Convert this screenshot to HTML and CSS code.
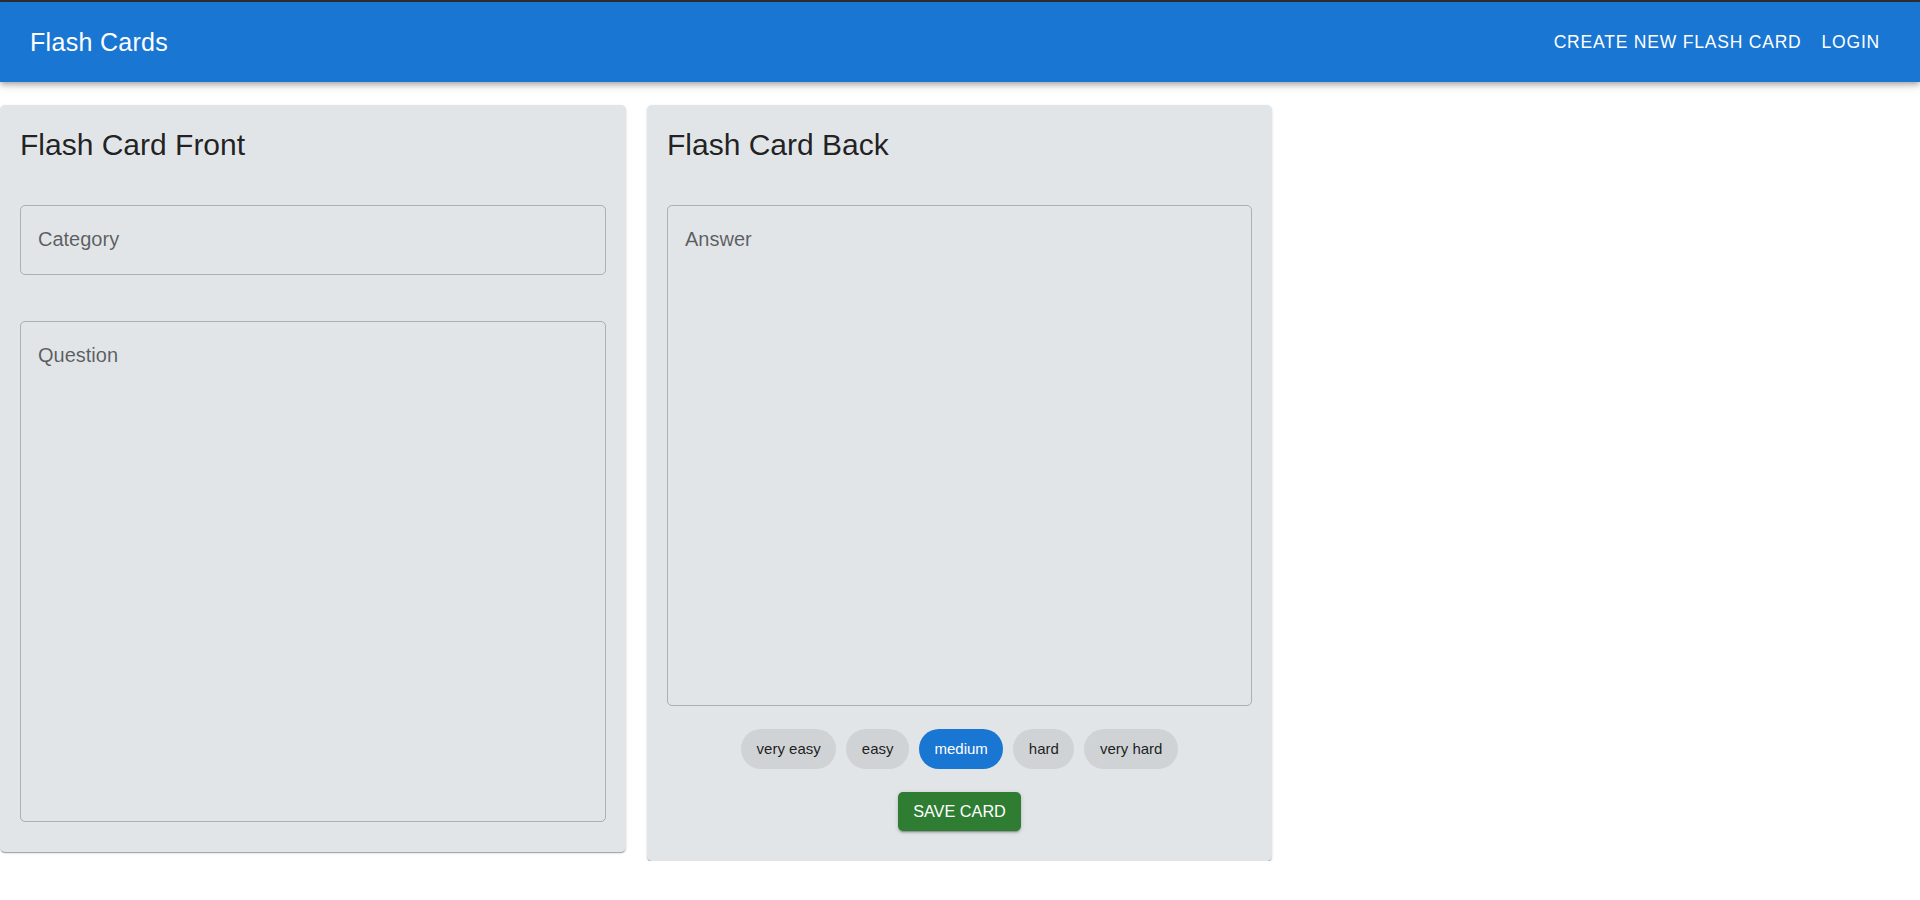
FILE: index.html
```html
<!DOCTYPE html>
<html lang="en">
<head>
<meta charset="utf-8">
<title>Flash Cards</title>
<link rel="stylesheet" href="styles.css">
</head>
<body>
<div class="topline"></div>
<header class="appbar">
  <div class="brand">Flash Cards</div>
  <nav class="nav">
    <a class="nav-btn" href="#">Create New Flash Card</a>
    <a class="nav-btn" href="#">Login</a>
  </nav>
</header>
<main class="cards">
  <section class="card">
    <h2 class="card-title">Flash Card Front</h2>
    <div class="field field-single"><span class="field-label">Category</span></div>
    <div class="field field-multi field-question"><span class="field-label">Question</span></div>
  </section>
  <section class="card">
    <h2 class="card-title">Flash Card Back</h2>
    <div class="field field-multi"><span class="field-label">Answer</span></div>
    <div class="chips">
      <span class="chip">very easy</span>
      <span class="chip">easy</span>
      <span class="chip chip-active">medium</span>
      <span class="chip">hard</span>
      <span class="chip">very hard</span>
    </div>
    <div class="actions">
      <button class="save-btn" type="button">Save Card</button>
    </div>
  </section>
</main>
</body>
</html>
```
FILE: styles.css
```css
* { box-sizing: border-box; }
body {
  margin: 0;
  background: #ffffff;
  font-family: "Liberation Sans", Arial, sans-serif;
  color: rgba(0, 0, 0, 0.87);
}
.topline {
  height: 2px;
  background: #303030;
}
.appbar {
  position: relative;
  z-index: 2;
  height: 80px;
  padding: 0 30px;
  background: #1976d2;
  color: #ffffff;
  display: flex;
  align-items: center;
  justify-content: space-between;
  box-shadow: 0 2px 5px -1px rgba(0,0,0,0.2), 0 4px 6px 0 rgba(0,0,0,0.14), 0 1px 12px 0 rgba(0,0,0,0.12);
}
.brand {
  font-size: 25px;
  letter-spacing: 0.3px;
  line-height: 1;
}
.nav {
  display: flex;
  align-items: center;
}
.nav-btn {
  color: #ffffff;
  text-decoration: none;
  text-transform: uppercase;
  font-size: 17.5px;
  letter-spacing: 0.8px;
  padding: 7.5px 10px;
  line-height: 1.75;
}
.cards {
  display: flex;
  align-items: flex-start;
  gap: 21px;
  margin-top: 23px;
}
.card {
  width: 626px;
  background: #e1e5e8;
  border-radius: 5px;
  padding: 20px 20px 30px 20px;
  box-shadow: 0 2px 1px -1px rgba(0,0,0,0.2), 0 1px 1px 0 rgba(0,0,0,0.14), 0 1px 3px 0 rgba(0,0,0,0.12);
}
.card + .card { width: 625px; }
.card-title {
  margin: 0 0 40px 0;
  font-size: 30px;
  font-weight: 400;
  line-height: 40px;
  color: rgba(0, 0, 0, 0.87);
}
.field {
  border: 1px solid rgba(0, 0, 0, 0.23);
  border-radius: 5px;
  padding: 21px 17px 0 17px;
}
.field-single { height: 70px; margin-bottom: 46px; }
.field-multi { height: 501px; }
.field-label {
  display: block;
  font-size: 20px;
  line-height: 24px;
  color: rgba(0, 0, 0, 0.6);
}
.chips {
  display: flex;
  justify-content: center;
  gap: 10px;
  margin-top: 23px;
}
.chip {
  height: 40px;
  padding: 0 15.5px;
  border-radius: 20px;
  background: rgba(0, 0, 0, 0.08);
  font-size: 15px;
  line-height: 40px;
  color: rgba(0, 0, 0, 0.87);
}
.chip-active {
  background: #1976d2;
  color: #ffffff;
}
.actions {
  display: flex;
  justify-content: center;
  margin-top: 23px;
}
.save-btn {
  height: 38.5px;
  padding: 0 15px;
  border: 0;
  border-radius: 5px;
  background: #2e7d32;
  color: #ffffff;
  font-family: "Liberation Sans", Arial, sans-serif;
  font-size: 16.25px;
  text-transform: uppercase;
  box-shadow: 0 3px 1px -2px rgba(0,0,0,0.2), 0 2px 2px 0 rgba(0,0,0,0.14), 0 1px 5px 0 rgba(0,0,0,0.12);
}
```
